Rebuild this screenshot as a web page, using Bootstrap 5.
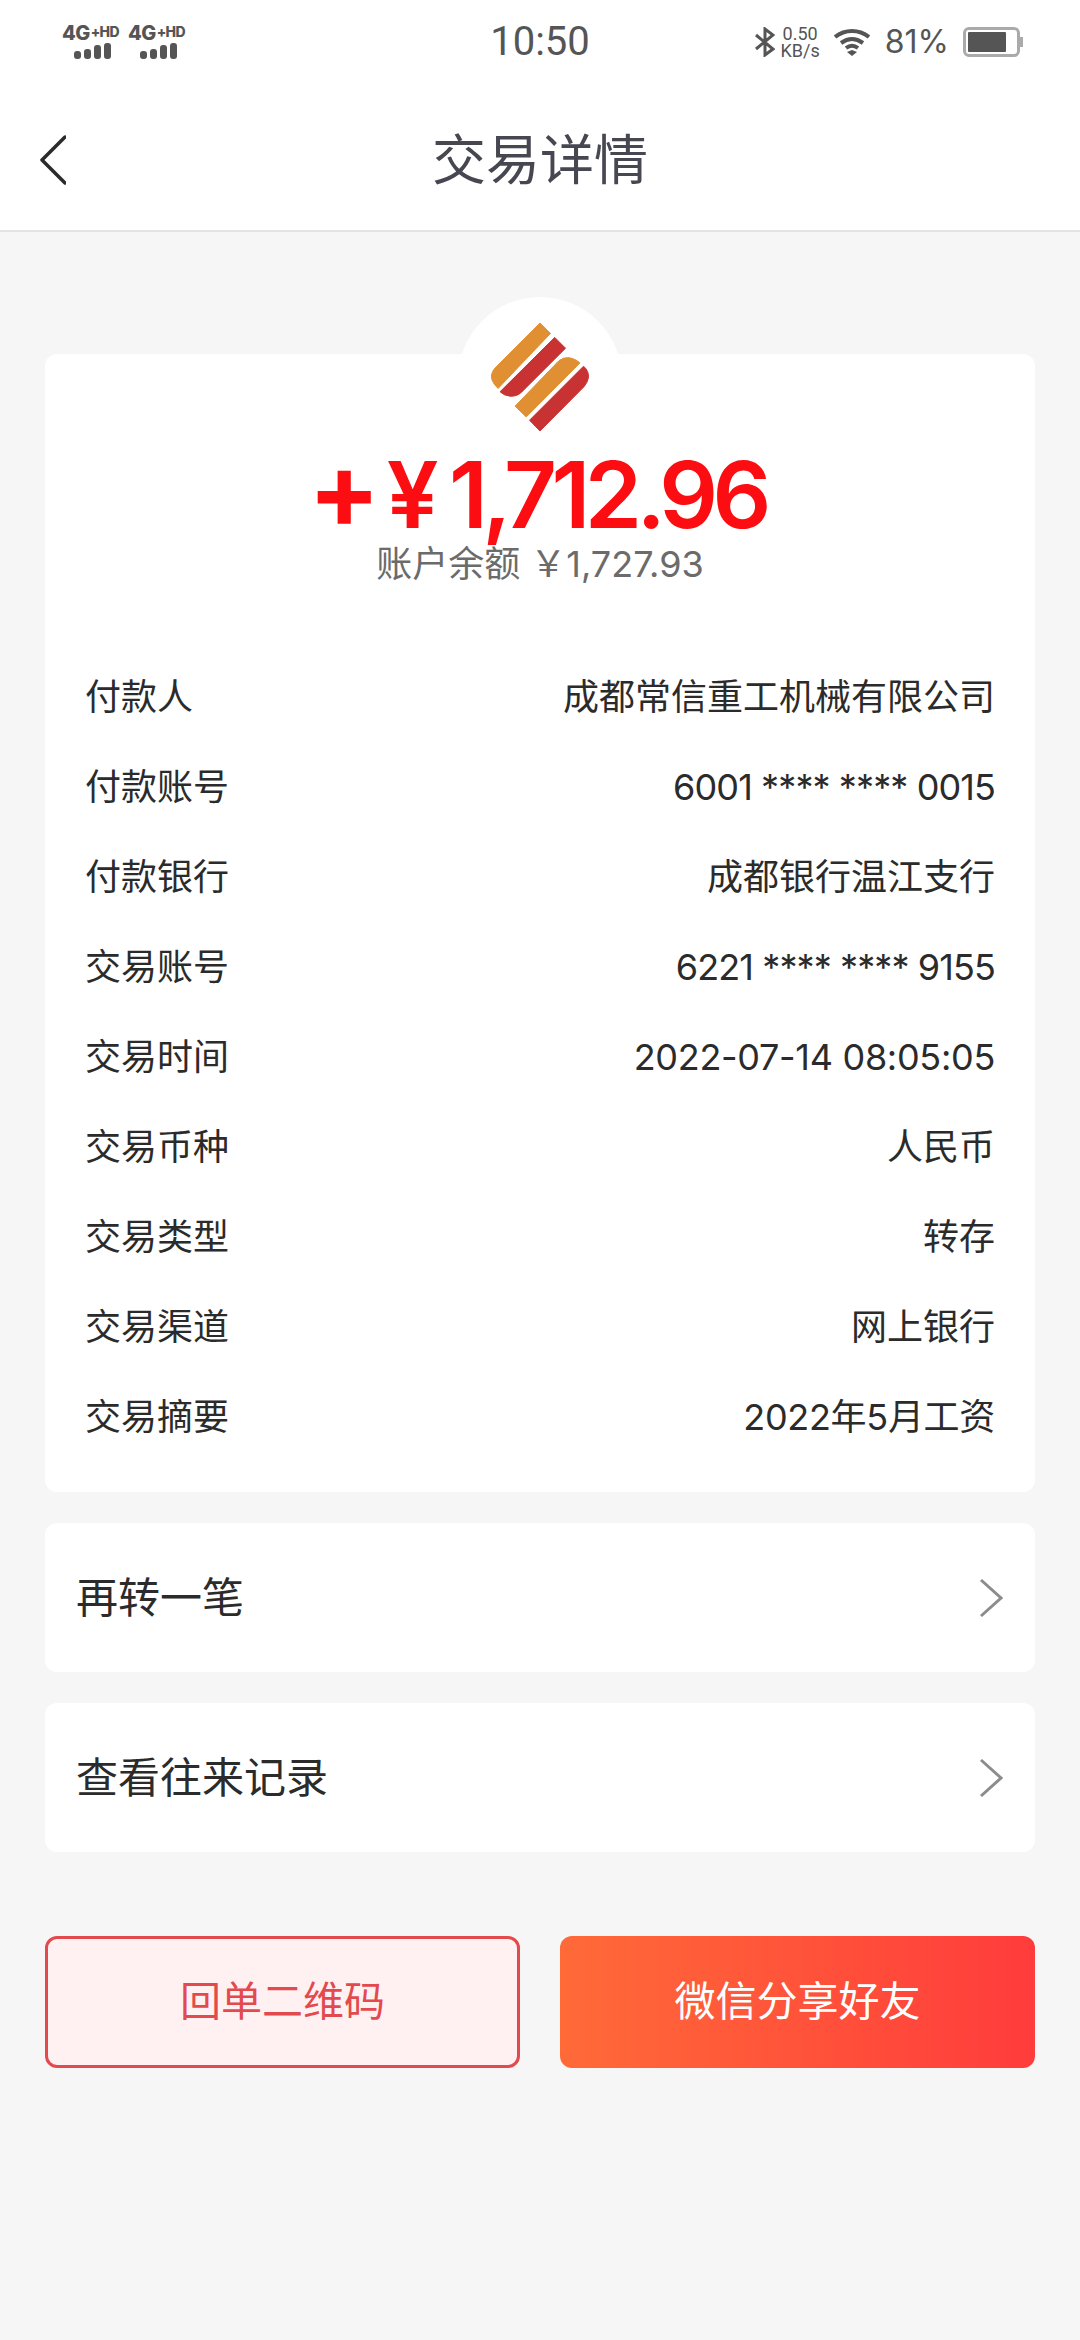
<!DOCTYPE html>
<html lang="zh-CN">
<head>
  <meta charset="UTF-8">
  <title>交易详情</title>
  <meta name="viewport" content="width=device-width, initial-scale=1">
  <link href="https://cdn.jsdelivr.net/npm/bootstrap@5.3.3/dist/css/bootstrap.min.css" rel="stylesheet">
  <style>
    body {
      width: 1080px;
      min-height: 2340px;
      background-color: #f6f6f6;
      font-family: Inter, "Noto Sans CJK SC", sans-serif;
      color: #2b2b2b;
    }
    .top-area {
      background: #fff;
      border-bottom: 2px solid #e3e3e3;
    }
    .status-bar {
      height: 84px;
      padding: 0 57px 0 62px;
      color: #555;
    }
    .sim-block {
      width: 66px;
    }
    .sim-text {
      font-size: 20px;
      line-height: 16px;
      font-weight: 800;
      letter-spacing: -.6px;
      white-space: nowrap;
    }
    .sim-text span {
      font-size: 14px;
      position: relative;
      top: -3px;
      margin-left: 1px;
    }
    .sim-bars {
      height: 16px;
      gap: 3px;
      padding-left: 12px;
    }
    .sim-bars i {
      width: 7px;
      background: #555;
      border-radius: 3px;
    }
    .clock {
      font-family: Roboto, sans-serif;
      font-size: 40px;
      line-height: 1;
      margin-left: -5px;
    }
    .speed {
      font-family: Roboto, sans-serif;
      font-size: 18px;
      line-height: 17px;
      text-align: center;
      margin-left: 6px;
    }
    .wifi-icon {
      margin-left: 14px;
    }
    .percent {
      font-size: 32px;
      line-height: 1;
      margin-left: 15px;
    }
    .battery {
      width: 57px;
      height: 30px;
      border: 3px solid #aaa;
      border-radius: 6px;
      padding: 2px;
      margin-left: 14px;
    }
    .battery i {
      display: block;
      width: 81%;
      height: 100%;
      background: #555;
      border-radius: 1px;
    }
    .battery-tip {
      width: 3px;
      height: 10px;
      background: #aaa;
    }
    .title-bar {
      height: 146px;
      padding: 6px 0 0 40px;
    }
    .title-text {
      font-size: 54px;
      line-height: 1;
      color: #474752;
      margin-top: 2px;
    }
    .main-area {
      padding: 122px 45px 0;
    }
    .detail-card {
      border: 0;
      border-radius: 12px;
      padding-bottom: 30px;
    }
    .logo-back {
      width: 164px;
      height: 164px;
      border-radius: 50%;
      background: #fff;
      top: -57px;
      left: 413px;
    }
    .logo-mark {
      width: 100px;
      height: 110px;
      margin-top: -32px;
      z-index: 1;
    }
    .logo-mark path {
      stroke-width: 3px;
    }
    .amount {
      font-size: 92px;
      line-height: 97px;
      font-weight: 600;
      color: #fb0d12;
      margin: 13px 0 0 -6px;
      letter-spacing: -5.6px;
      white-space: nowrap;
    }
    .amount b {
      font-size: 106px;
      line-height: 90px;
      font-weight: 700;
      margin-right: 12px;
    }
    .amount .yen {
      margin-right: 16px;
    }
    .balance {
      font-size: 36px;
      line-height: 42px;
      color: #6b6b6b;
      margin-bottom: 67px;
    }
    .info-row {
      height: 90px;
      padding: 0 40px;
      font-size: 36px;
    }
    .card-no {
      letter-spacing: -.9px;
    }
    .date-val {
      letter-spacing: -.3px;
    }
    .link-card {
      border: 0;
      border-radius: 12px;
      height: 149px;
      padding: 0 32px 0 31px;
      font-size: 42px;
      margin-top: 31px;
      background: #fff;
    }
    .btn-area {
      margin-top: 84px;
      gap: 40px;
    }
    .act-btn {
      width: 475px;
      height: 132px;
      border-radius: 12px;
      font-size: 41px;
    }
    .act-btn.outline-red {
      background: #fff0f1;
      border: 3px solid #e24a4e;
      color: #e24a4e;
    }
    .act-btn.fill-red {
      background: linear-gradient(90deg, #ff6a38, #ff3c3c);
      border: 0;
      color: #fff;
    }
  </style>
</head>
<body>
  <div class="top-area">
    <div class="status-bar d-flex align-items-center justify-content-between">
      <div class="d-flex" style="width:300px">
        <div class="sim-block">
          <div class="sim-text">4G<span>+HD</span></div>
          <div class="sim-bars d-flex align-items-end"><i style="height:8px"></i><i style="height:10px"></i><i style="height:14px"></i><i style="height:16px"></i></div>
        </div>
        <div class="sim-block">
          <div class="sim-text">4G<span>+HD</span></div>
          <div class="sim-bars d-flex align-items-end"><i style="height:8px"></i><i style="height:10px"></i><i style="height:14px"></i><i style="height:16px"></i></div>
        </div>
      </div>
      <div class="clock">10:50</div>
      <div class="d-flex align-items-center justify-content-end" style="width:300px">
        <svg width="20" height="30" viewBox="0 0 20 30" fill="none" stroke="#555" stroke-width="3"><path d="M1 8l17 14-8 6V2l8 6L1 22"/></svg>
        <div class="speed">0.50<br>KB/s</div>
        <svg class="wifi-icon" width="36" height="28" viewBox="0 0 36 28" fill="none" stroke="#555" stroke-width="4"><path d="M1 9c10-8 24-8 34 0M7 15c7-5 15-5 22 0M12 20c4-3 8-3 12 0"/><path d="M13 24l5-2 5 2-5 4z" fill="#555" stroke="none"/></svg>
        <div class="percent">81%</div>
        <div class="battery"><i></i></div>
        <div class="battery-tip"></div>
      </div>
    </div>
    <div class="title-bar d-flex align-items-center position-relative">
      <svg width="26" height="50" viewBox="0 0 26 50" fill="none" stroke="#2b2b2b" stroke-width="3.5" stroke-linecap="round" stroke-linejoin="round"><path d="M25 2L2 25l23 23"/></svg>
      <div class="title-text position-absolute start-0 end-0 text-center">交易详情</div>
    </div>
  </div>

  <div class="main-area">
    <div class="card detail-card position-relative">
      <div class="logo-back position-absolute"></div>
      <div class="d-flex flex-column align-items-center position-relative">
        <svg class="logo-mark" viewBox="628 125 304 336">
          <path fill="#e08f33" stroke="#e08f33" d="M780 128L812 160 652 328Q628 305 632 285 636 270 650 258Z"/>
          <path fill="#c93232" stroke="#c93232" d="M825 172L858 205 725 338Q712 352 690 352 670 350 658 338Z"/>
          <path fill="#e08f33" stroke="#e08f33" d="M836 245Q850 232 870 234 890 238 902 250L738 415 704 382Z"/>
          <path fill="#c93232" stroke="#c93232" d="M913 260Q930 275 928 295 925 310 915 322L780 458 748 425Z"/>
        </svg>
        <div class="amount"><b>+</b><span class="yen">¥</span>1,712.96</div>
        <div class="balance">账户余额 ￥1,727.93</div>
      </div>
      <div class="info-row d-flex align-items-center justify-content-between"><span>付款人</span><span>成都常信重工机械有限公司</span></div>
      <div class="info-row d-flex align-items-center justify-content-between"><span>付款账号</span><span class="card-no">6001 **** **** 0015</span></div>
      <div class="info-row d-flex align-items-center justify-content-between"><span>付款银行</span><span>成都银行温江支行</span></div>
      <div class="info-row d-flex align-items-center justify-content-between"><span>交易账号</span><span class="card-no">6221 **** **** 9155</span></div>
      <div class="info-row d-flex align-items-center justify-content-between"><span>交易时间</span><span class="date-val">2022-07-14 08:05:05</span></div>
      <div class="info-row d-flex align-items-center justify-content-between"><span>交易币种</span><span>人民币</span></div>
      <div class="info-row d-flex align-items-center justify-content-between"><span>交易类型</span><span>转存</span></div>
      <div class="info-row d-flex align-items-center justify-content-between"><span>交易渠道</span><span>网上银行</span></div>
      <div class="info-row d-flex align-items-center justify-content-between"><span>交易摘要</span><span class="date-val">2022年5月工资</span></div>
    </div>

    <div class="link-card d-flex align-items-center justify-content-between">
      <span>再转一笔</span>
      <svg width="24" height="40" viewBox="0 0 24 40" fill="none" stroke="#8c8c8c" stroke-width="3"><path d="M2 2l20 18L2 38"/></svg>
    </div>
    <div class="link-card d-flex align-items-center justify-content-between">
      <span>查看往来记录</span>
      <svg width="24" height="40" viewBox="0 0 24 40" fill="none" stroke="#8c8c8c" stroke-width="3"><path d="M2 2l20 18L2 38"/></svg>
    </div>

    <div class="btn-area d-flex">
      <button type="button" class="btn act-btn outline-red">回单二维码</button>
      <button type="button" class="btn act-btn fill-red">微信分享好友</button>
    </div>
  </div>
  <script src="https://cdn.jsdelivr.net/npm/bootstrap@5.3.3/dist/js/bootstrap.bundle.min.js"></script>
</body>
</html>
